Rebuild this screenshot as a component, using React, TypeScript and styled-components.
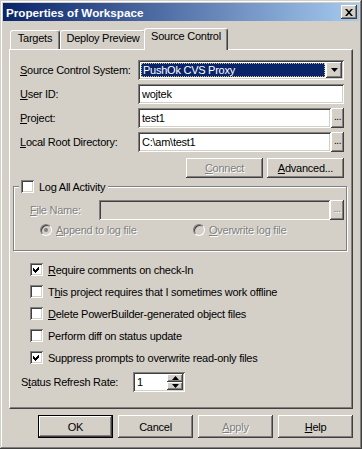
import React from "react";
import styled, { createGlobalStyle, css } from "styled-components";

const FACE = "#D4D0C8";

const Global = createGlobalStyle`
  html, body { margin: 0; padding: 0; background: ${FACE}; }
  body {
    font-family: "Liberation Sans", Arial, sans-serif;
    font-size: 11px;
    letter-spacing: -0.25px;
    color: #000;
  }
  * { box-sizing: border-box; }
  u { text-underline-offset: 1px; }
`;

const raised = css`
  background: ${FACE};
  box-shadow: inset -1px -1px 0 #404040, inset 1px 1px 0 #ffffff,
    inset -2px -2px 0 #808080, inset 2px 2px 0 ${FACE};
`;

const sunken = css`
  box-shadow: inset 1px 1px 0 #808080, inset -1px -1px 0 #ffffff,
    inset 2px 2px 0 #404040, inset -2px -2px 0 ${FACE};
`;

const disabledText = css`
  color: #808080;
  text-shadow: 1px 1px 0 #ffffff;
`;

const Window = styled.div`
  width: 362px;
  height: 449px;
  padding: 3px;
  background: ${FACE};
  box-shadow: inset -1px -1px 0 #404040, inset 1px 1px 0 ${FACE},
    inset -2px -2px 0 #808080, inset 2px 2px 0 #ffffff;
  display: flex;
  flex-direction: column;
`;

const TitleBar = styled.div`
  height: 18px;
  display: flex;
  align-items: center;
  justify-content: space-between;
  padding: 0 2px 0 3px;
  background: linear-gradient(to right, #0a246a, #a6caf0);
`;

const TitleText = styled.span`
  color: #ffffff;
  font-weight: bold;
  font-size: 11.7px;
  letter-spacing: 0;
`;

const CloseButton = styled.div`
  width: 16px;
  height: 14px;
  ${raised};
  display: flex;
  align-items: center;
  justify-content: center;
  padding-right: 1px;
`;

const TabRow = styled.div`
  display: flex;
  align-items: flex-end;
  height: 21px;
  margin: 7px 0 0 7px;
`;

const Tab = styled.div<{ $w: number; $sel?: boolean }>`
  width: ${(p) => p.$w}px;
  height: ${(p) => (p.$sel ? 22 : 19)}px;
  margin: 0 0 ${(p) => (p.$sel ? -1 : 0)}px ${(p) => (p.$sel ? -2 : 0)}px;
  position: relative;
  z-index: ${(p) => (p.$sel ? 1 : 0)};
  background: ${FACE};
  border-top: 1px solid #ffffff;
  border-left: 1px solid #ffffff;
  border-right: 1px solid #404040;
  box-shadow: inset -1px 0 0 #808080;
  border-radius: 3px 3px 0 0;
  padding-top: 1px;
  line-height: 13px;
  text-align: center;
  white-space: nowrap;
`;

const Panel = styled.div`
  margin: 0 6px;
  height: 360px;
  border-top: 1px solid #ffffff;
  border-left: 1px solid #ffffff;
  border-right: 1px solid #404040;
  border-bottom: 1px solid #404040;
  box-shadow: inset -1px -1px 0 #808080;
  padding: 10px 8px 0 10px;
  display: flex;
  flex-direction: column;
`;

const Fields = styled.div`
  display: flex;
  flex-direction: column;
  gap: 4px;
`;

const FieldRow = styled.div`
  display: grid;
  grid-template-columns: 118px 1fr;
  align-items: center;
  height: 20px;
`;

const Label = styled.span<{ $disabled?: boolean }>`
  white-space: nowrap;
  ${(p) => p.$disabled && disabledText};
`;

const Combo = styled.div`
  width: 206px;
  height: 20px;
  background: #ffffff;
  ${sunken};
  display: flex;
  padding: 2px;
`;

const ComboSelection = styled.div`
  flex: 1;
  margin: 1px;
  background: #0a246a;
  color: #ffffff;
  outline: 1px dotted #c8c080;
  outline-offset: -1px;
  line-height: 14px;
  padding-left: 2px;
`;

const ArrowButton = styled.div`
  width: 16px;
  height: 16px;
  ${raised};
  display: flex;
  align-items: center;
  justify-content: center;
`;

const InputGroup = styled.div`
  display: flex;
  height: 20px;
`;

const TextBox = styled.div<{ $disabled?: boolean }>`
  flex: 1;
  height: 20px;
  background: ${(p) => (p.$disabled ? FACE : "#ffffff")};
  ${sunken};
  padding-left: 4px;
  line-height: 20px;
  white-space: nowrap;
`;

const DotsButton = styled.div<{ $w?: number; $disabled?: boolean }>`
  width: ${(p) => p.$w ?? 13}px;
  height: 20px;
  ${raised};
  text-align: center;
  line-height: 18px;
  font-size: 10px;
  letter-spacing: -0.5px;
  ${(p) => p.$disabled && disabledText};
`;

const ActionRow = styled.div`
  display: flex;
  justify-content: flex-end;
  gap: 4px;
  margin-top: 6px;
`;

const PushButton = styled.div<{ $w: number; $h: number; $default?: boolean; $disabled?: boolean }>`
  width: ${(p) => p.$w}px;
  height: ${(p) => p.$h}px;
  ${raised};
  border: ${(p) => (p.$default ? "1px solid #000000" : "none")};
  display: flex;
  align-items: center;
  justify-content: center;
  ${(p) => p.$disabled && disabledText};
`;

const GroupBox = styled.div`
  margin: 8px -3px 0 -7px;
  height: 65px;
  border: 1px solid #808080;
  box-shadow: inset 1px 1px 0 #ffffff, 1px 1px 0 #ffffff;
  display: flex;
  flex-direction: column;
`;

const Legend = styled.div`
  display: flex;
  align-items: center;
  gap: 5px;
  height: 13px;
  margin: -7px 0 0 5px;
  padding: 0 3px 0 2px;
  width: fit-content;
  background: ${FACE};
  white-space: nowrap;
`;

const FileRow = styled.div`
  display: grid;
  grid-template-columns: 69px 1fr;
  align-items: center;
  height: 20px;
  margin-top: 7px;
  padding: 0 2px 0 16px;
`;

const RadioRow = styled.div`
  display: grid;
  grid-template-columns: 153px 1fr;
  align-items: center;
  height: 12px;
  margin-top: 4px;
  padding-left: 26px;
`;

const RadioItem = styled.div`
  display: flex;
  align-items: center;
  gap: 4px;
  white-space: nowrap;
`;

const RadioCircle = styled.div<{ $checked?: boolean }>`
  width: 12px;
  height: 12px;
  border-radius: 50%;
  border: 1px solid;
  border-color: #808080 #ffffff #ffffff #808080;
  background: ${FACE};
  box-shadow: inset 1px 1px 0 #404040, inset -1px -1px 0 ${FACE};
  display: flex;
  align-items: center;
  justify-content: center;
  &::after {
    content: "";
    width: 4px;
    height: 4px;
    border-radius: 50%;
    background: ${(p) => (p.$checked ? "#808080" : "transparent")};
  }
`;

const CheckList = styled.div`
  display: flex;
  flex-direction: column;
  gap: 9px;
  margin: 12px 0 0 10px;
`;

const CheckRow = styled.div`
  display: flex;
  align-items: center;
  gap: 5px;
  height: 13px;
  white-space: nowrap;
`;

const CheckBox = styled.div`
  width: 13px;
  height: 13px;
  flex: none;
  background: #ffffff;
  ${sunken};
  display: flex;
  align-items: center;
  justify-content: center;
`;

const StatusRow = styled.div`
  display: flex;
  align-items: center;
  height: 20px;
  margin-top: 8px;
`;

const StatusLabel = styled.span`
  width: 113px;
  padding-left: 1px;
  white-space: nowrap;
`;

const Spin = styled.div`
  width: 52px;
  height: 20px;
  background: #ffffff;
  ${sunken};
  display: flex;
  padding: 2px 2px 2px 4px;
  line-height: 16px;
`;

const SpinValue = styled.span`
  flex: 1;
`;

const SpinButtons = styled.div`
  display: flex;
  flex-direction: column;
  width: 16px;
`;

const SpinButton = styled.div`
  flex: 1;
  ${raised};
  display: flex;
  align-items: center;
  justify-content: center;
`;

const BottomRow = styled.div`
  display: flex;
  justify-content: flex-end;
  gap: 5px;
  margin: 6px 6px 0 0;
`;

const CheckMark = () => (
  <svg width="7" height="7" viewBox="0 0 7 7" shapeRendering="crispEdges">
    <path d="M0 2 L2 4 L6 0 L6 3 L2 7 L0 5 Z" fill="#000" />
  </svg>
);

const DownArrow = ({ w = 7 }: { w?: number }) => (
  <svg width={w} height={Math.ceil(w / 2)} viewBox={`0 0 ${w} ${Math.ceil(w / 2)}`}>
    <path d={`M0 0 H${w} L${w / 2} ${Math.ceil(w / 2)} Z`} fill="#000" />
  </svg>
);

const UpArrow = ({ w = 7 }: { w?: number }) => (
  <svg width={w} height={Math.ceil(w / 2)} viewBox={`0 0 ${w} ${Math.ceil(w / 2)}`}>
    <path d={`M0 ${Math.ceil(w / 2)} H${w} L${w / 2} 0 Z`} fill="#000" />
  </svg>
);

const Check = ({ checked, children }: { checked?: boolean; children: React.ReactNode }) => (
  <CheckRow>
    <CheckBox>{checked && <CheckMark />}</CheckBox>
    <span>{children}</span>
  </CheckRow>
);

export default function App() {
  return (
    <>
      <Global />
      <Window>
        <TitleBar>
          <TitleText>Properties of Workspace</TitleText>
          <CloseButton>
            <svg width="8" height="7" viewBox="0 0 8 7">
              <path d="M0 0h2l2 2.3l2-2.3h2l-3 3.5l3 3.5h-2l-2-2.3l-2 2.3h-2l3-3.5z" fill="#000" />
            </svg>
          </CloseButton>
        </TitleBar>

        <TabRow>
          <Tab $w={50}>Targets</Tab>
          <Tab $w={86}>Deploy Preview</Tab>
          <Tab $w={84} $sel>Source Control</Tab>
        </TabRow>

        <Panel>
          <Fields>
            <FieldRow>
              <Label><u>S</u>ource Control System:</Label>
              <Combo>
                <ComboSelection>PushOk CVS Proxy</ComboSelection>
                <ArrowButton><DownArrow /></ArrowButton>
              </Combo>
            </FieldRow>
            <FieldRow>
              <Label><u>U</u>ser ID:</Label>
              <InputGroup>
                <TextBox>wojtek</TextBox>
              </InputGroup>
            </FieldRow>
            <FieldRow>
              <Label><u>P</u>roject:</Label>
              <InputGroup>
                <TextBox>test1</TextBox>
                <DotsButton>...</DotsButton>
              </InputGroup>
            </FieldRow>
            <FieldRow>
              <Label><u>L</u>ocal Root Directory:</Label>
              <InputGroup>
                <TextBox>C:\am\test1</TextBox>
                <DotsButton>...</DotsButton>
              </InputGroup>
            </FieldRow>
          </Fields>

          <ActionRow>
            <PushButton $w={77} $h={20} $disabled><u>C</u>onnect</PushButton>
            <PushButton $w={77} $h={20}><u>A</u>dvanced...</PushButton>
          </ActionRow>

          <GroupBox>
            <Legend>
              <CheckBox />
              <span>Log All Activity</span>
            </Legend>
            <FileRow>
              <Label $disabled><u>F</u>ile Name:</Label>
              <InputGroup>
                <TextBox $disabled />
                <DotsButton $w={14} $disabled>...</DotsButton>
              </InputGroup>
            </FileRow>
            <RadioRow>
              <RadioItem>
                <RadioCircle $checked />
                <Label $disabled><u>A</u>ppend to log file</Label>
              </RadioItem>
              <RadioItem>
                <RadioCircle />
                <Label $disabled><u>O</u>verwrite log file</Label>
              </RadioItem>
            </RadioRow>
          </GroupBox>

          <CheckList>
            <Check checked><u>R</u>equire comments on check-In</Check>
            <Check>T<u>h</u>is project requires that I sometimes work offline</Check>
            <Check><u>D</u>elete PowerBuilder-generated object files</Check>
            <Check>Perform diff on status update</Check>
            <Check checked>Suppress prompts to overwrite read-only files</Check>
          </CheckList>

          <StatusRow>
            <StatusLabel>S<u>t</u>atus Refresh Rate:</StatusLabel>
            <Spin>
              <SpinValue>1</SpinValue>
              <SpinButtons>
                <SpinButton><UpArrow /></SpinButton>
                <SpinButton><DownArrow /></SpinButton>
              </SpinButtons>
            </Spin>
          </StatusRow>
        </Panel>

        <BottomRow>
          <PushButton $w={75} $h={23} $default>OK</PushButton>
          <PushButton $w={75} $h={23}>Cancel</PushButton>
          <PushButton $w={75} $h={23} $disabled><u>A</u>pply</PushButton>
          <PushButton $w={75} $h={23}><u>H</u>elp</PushButton>
        </BottomRow>
      </Window>
    </>
  );
}
